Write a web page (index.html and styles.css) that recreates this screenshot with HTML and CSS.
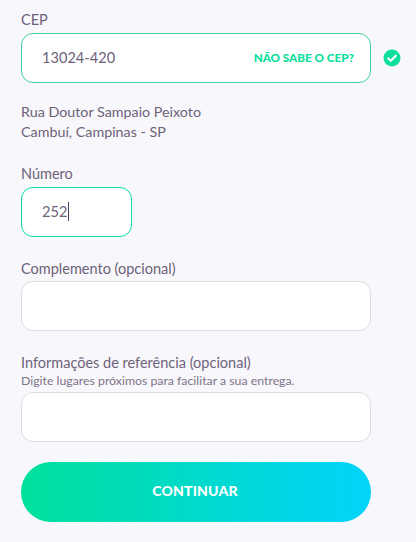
FILE: index.html
```html
<!DOCTYPE html>
<html lang="pt-BR">
<head>
  <meta charset="UTF-8">
  <meta name="viewport" content="width=device-width, initial-scale=1.0">
  <title>Endereço de entrega</title>
  <link rel="stylesheet" href="styles.css">
</head>
<body>
  <form class="address-form">
    <div class="field field-cep">
      <label class="field-label">CEP</label>
      <div class="input-row">
        <div class="input input-valid">
          <span class="input-value">13024-420</span>
          <a class="cep-link">NÃO SABE O CEP?</a>
        </div>
        <svg class="check" width="18" height="18" viewBox="0 0 18 18">
          <circle cx="9" cy="9" r="8.5" fill="#0adf9d"/>
          <path d="M5.2 9.3l2.6 2.5 5-5" fill="none" stroke="#fff" stroke-width="2.2" stroke-linecap="round" stroke-linejoin="round"/>
        </svg>
      </div>
    </div>

    <p class="address">Rua Doutor Sampaio Peixoto<br>Cambuí, Campinas - SP</p>

    <div class="field field-number">
      <label class="field-label">Número</label>
      <div class="input input-focus input-short">
        <span class="input-value">252</span><span class="caret"></span>
      </div>
    </div>

    <div class="field field-extra">
      <label class="field-label">Complemento (opcional)</label>
      <div class="input"></div>
    </div>

    <div class="field field-ref">
      <label class="field-label">Informações de referência (opcional)</label>
      <small class="field-hint">Digite lugares próximos para facilitar a sua entrega.</small>
      <div class="input"></div>
    </div>

    <button class="submit" type="button">CONTINUAR</button>
  </form>
</body>
</html>
```

FILE: styles.css
```css
* {
  box-sizing: border-box;
}
body {
  margin: 0;
  background: #f7f7fc;
  color: #6e6278;
  font-family: 'Lato', 'Open Sans', sans-serif;
  font-size: 14px;
}
.address-form {
  width: 350px;
  margin-left: 21px;
  padding-top: 11px;
}
.field-label {
  display: block;
  height: 22px;
  line-height: 18px;
  font-size: 14.5px;
}
.input-row {
  display: flex;
  align-items: center;
  width: 386px;
  gap: 12px;
}
.input {
  display: flex;
  align-items: center;
  flex: none;
  width: 350px;
  height: 50px;
  padding: 0 16px 2px 20px;
  background: #fff;
  border: 1px solid #e0dce6;
  border-radius: 12px;
}
.input-valid {
  border-color: #3ecf9e;
}
.input-focus {
  border-color: #0adf9d;
}
.input-short {
  width: 111px;
}
.input-value {
  font-size: 14.6px;
  color: #6e6278;
}
.caret {
  width: 1px;
  height: 19px;
  margin-left: 1px;
  background: #4a4250;
}
.cep-link {
  margin-left: auto;
  color: #0adf9d;
  font-size: 11.7px;
  font-weight: 900;
}
.check {
  flex: none;
}
.address {
  margin: 19px 0 0;
  font-size: 14.3px;
  line-height: 20px;
}
.field-number {
  margin-top: 23px;
}
.field-extra {
  margin-top: 23px;
}
.field-extra .field-label {
  height: 21px;
}
.field-ref {
  margin-top: 23px;
}
.field-ref .field-label {
  height: 20px;
}
.field-hint {
  display: block;
  height: 18px;
  font-size: 12.3px;
  line-height: 13px;
  color: #7f7488;
}
.submit {
  display: block;
  width: 350px;
  height: 60px;
  margin-top: 20px;
  padding: 0 2px 3px 0;
  border: none;
  border-radius: 30px;
  background: linear-gradient(90deg, #00e09b, #00d4fb);
  color: #fff;
  font-family: inherit;
  font-size: 14px;
  font-weight: 900;
  letter-spacing: 0.2px;
}
```
